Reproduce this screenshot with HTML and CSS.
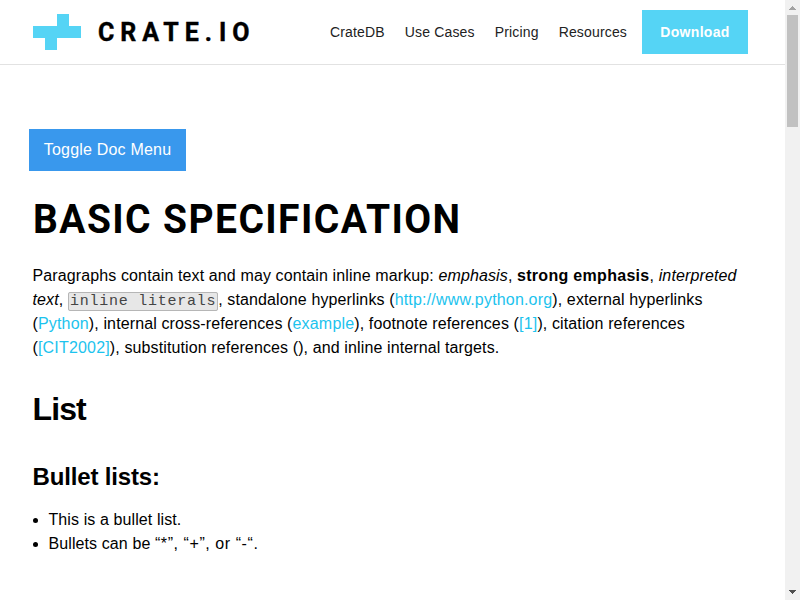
FILE: index.html
```html
<!DOCTYPE html>
<html lang="en">
<head>
<meta charset="utf-8">
<title>Basic Specification</title>
<link rel="stylesheet" href="styles.css">
</head>
<body>
<div class="page">
  <header class="header">
    <a class="logo">
      <svg class="mark" viewBox="0 0 48 36" aria-hidden="true"><path d="M24 0h12v12h12v12H24v12H12V24H0V12h24z"/></svg>
      <span class="wordmark">CRATE<span class="dot">.</span>IO</span>
    </a>
    <nav class="nav">
      <a>CrateDB</a><a>Use Cases</a><a>Pricing</a><a>Resources</a>
      <a class="download">Download</a>
    </nav>
  </header>
  <main class="content">
    <button class="toggle">Toggle Doc Menu</button>
    <h1>Basic Specification</h1>
    <p>Paragraphs contain text and may contain inline markup: <em>emphasis</em>, <strong>strong emphasis</strong>, <em>interpreted<br>text</em>, <code>inline literals</code>, standalone hyperlinks (<a>http://www.python.org</a>), external hyperlinks<br>(<a>Python</a>), internal cross-references (<a>example</a>), footnote references (<a>[1]</a>), citation references<br>(<a>[CIT2002]</a>), substitution references (), and inline internal targets.</p>
    <h2>List</h2>
    <h3>Bullet lists:</h3>
    <ul>
      <li>This is a bullet list.</li>
      <li>Bullets can be <span class="marks">“*”, “+”, or “-“.</span></li>
    </ul>
  </main>
</div>
<div class="scrollbar">
  <svg class="arrow up" viewBox="0 0 7 4" shape-rendering="crispEdges"><path d="M3 0h1v1h1v1h1v1h1v1H0V3h1V2h1V1h1z"/></svg>
  <div class="thumb"></div>
  <svg class="arrow down" viewBox="0 0 7 4" shape-rendering="crispEdges"><path d="M0 0h7v1H6v1H5v1H4v1H3V3H2V2H1V1H0z"/></svg>
</div>
</body>
</html>
```
FILE: styles.css
```css
* { box-sizing: border-box; }
body {
  margin: 0;
  height: 600px;
  display: flex;
  overflow: hidden;
  background: #fff;
  color: #000;
  font: 16px/24px "Liberation Sans", Arial, sans-serif;
}
.page { width: 785px; }
.header {
  height: 65px;
  padding: 0 37px 0 33px;
  border-bottom: 1px solid #e2e2e2;
  display: flex;
  align-items: center;
  justify-content: space-between;
}
.logo { display: flex; align-items: center; gap: 17px; }
.mark { width: 48px; height: 36px; fill: #55d4f5; }
.wordmark {
  padding-top: 2px;
  font: 700 25px/34px Roboto, sans-serif;
  letter-spacing: 5.9px;
  -webkit-text-stroke: .4px #000;
}
.dot { letter-spacing: 7px; }
.nav { display: flex; align-items: center; gap: 20px; font-size: 14px; letter-spacing: .16px; color: #222; }
.nav .download {
  width: 106px;
  height: 44px;
  margin-left: -5px;
  background: #55d4f5;
  color: #fff;
  font-weight: 700;
  letter-spacing: .3px;
  line-height: 44px;
  text-align: center;
}
.content { padding: 64px 33px 0 32.5px; }
.toggle {
  display: block;
  width: 157px;
  height: 42px;
  margin-left: -3.5px;
  padding: 0;
  border: 0;
  background: #3998ed;
  color: #fff;
  font: 16px/42px "Liberation Sans", Arial, sans-serif;
  letter-spacing: .2px;
}
h1 {
  margin: 24px 0 21px;
  font: 700 41px/48px Roboto, sans-serif;
  letter-spacing: 1.5px;
  text-transform: uppercase;
  white-space: nowrap;
  transform: scaleX(.95);
  transform-origin: left;
}
p { margin: 0; white-space: nowrap; letter-spacing: .12px; }
p a { color: #1cc3ee; letter-spacing: .18px; }
strong { letter-spacing: .3px; }
code {
  padding: 0 1px;
  border: 1px solid #b6b6b6;
  border-radius: 2px;
  background: #e7e7e7;
  color: #444;
  font: 15px/16px "Liberation Mono", monospace;
  letter-spacing: .75px;
}
h2 { margin: 29px 0 0; font-size: 32px; line-height: 40px; letter-spacing: -.9px; }
h3 { margin: 32px 0 0; font-size: 24px; line-height: 32px; letter-spacing: -.15px; }
ul { margin: 15px 0 0; padding-left: 16px; letter-spacing: .1px; }
.marks { letter-spacing: .57px; }
.scrollbar {
  width: 15px;
  height: 600px;
  padding: 6px 0;
  background: #f1f1f1;
  display: flex;
  flex-direction: column;
  align-items: center;
}
.arrow { width: 7px; height: 4px; }
.up { fill: #a3a3a3; }
.down { fill: #505050; margin-top: auto; }
.thumb { width: 11px; height: 112px; margin-top: 5px; background: #c1c1c1; }
```
